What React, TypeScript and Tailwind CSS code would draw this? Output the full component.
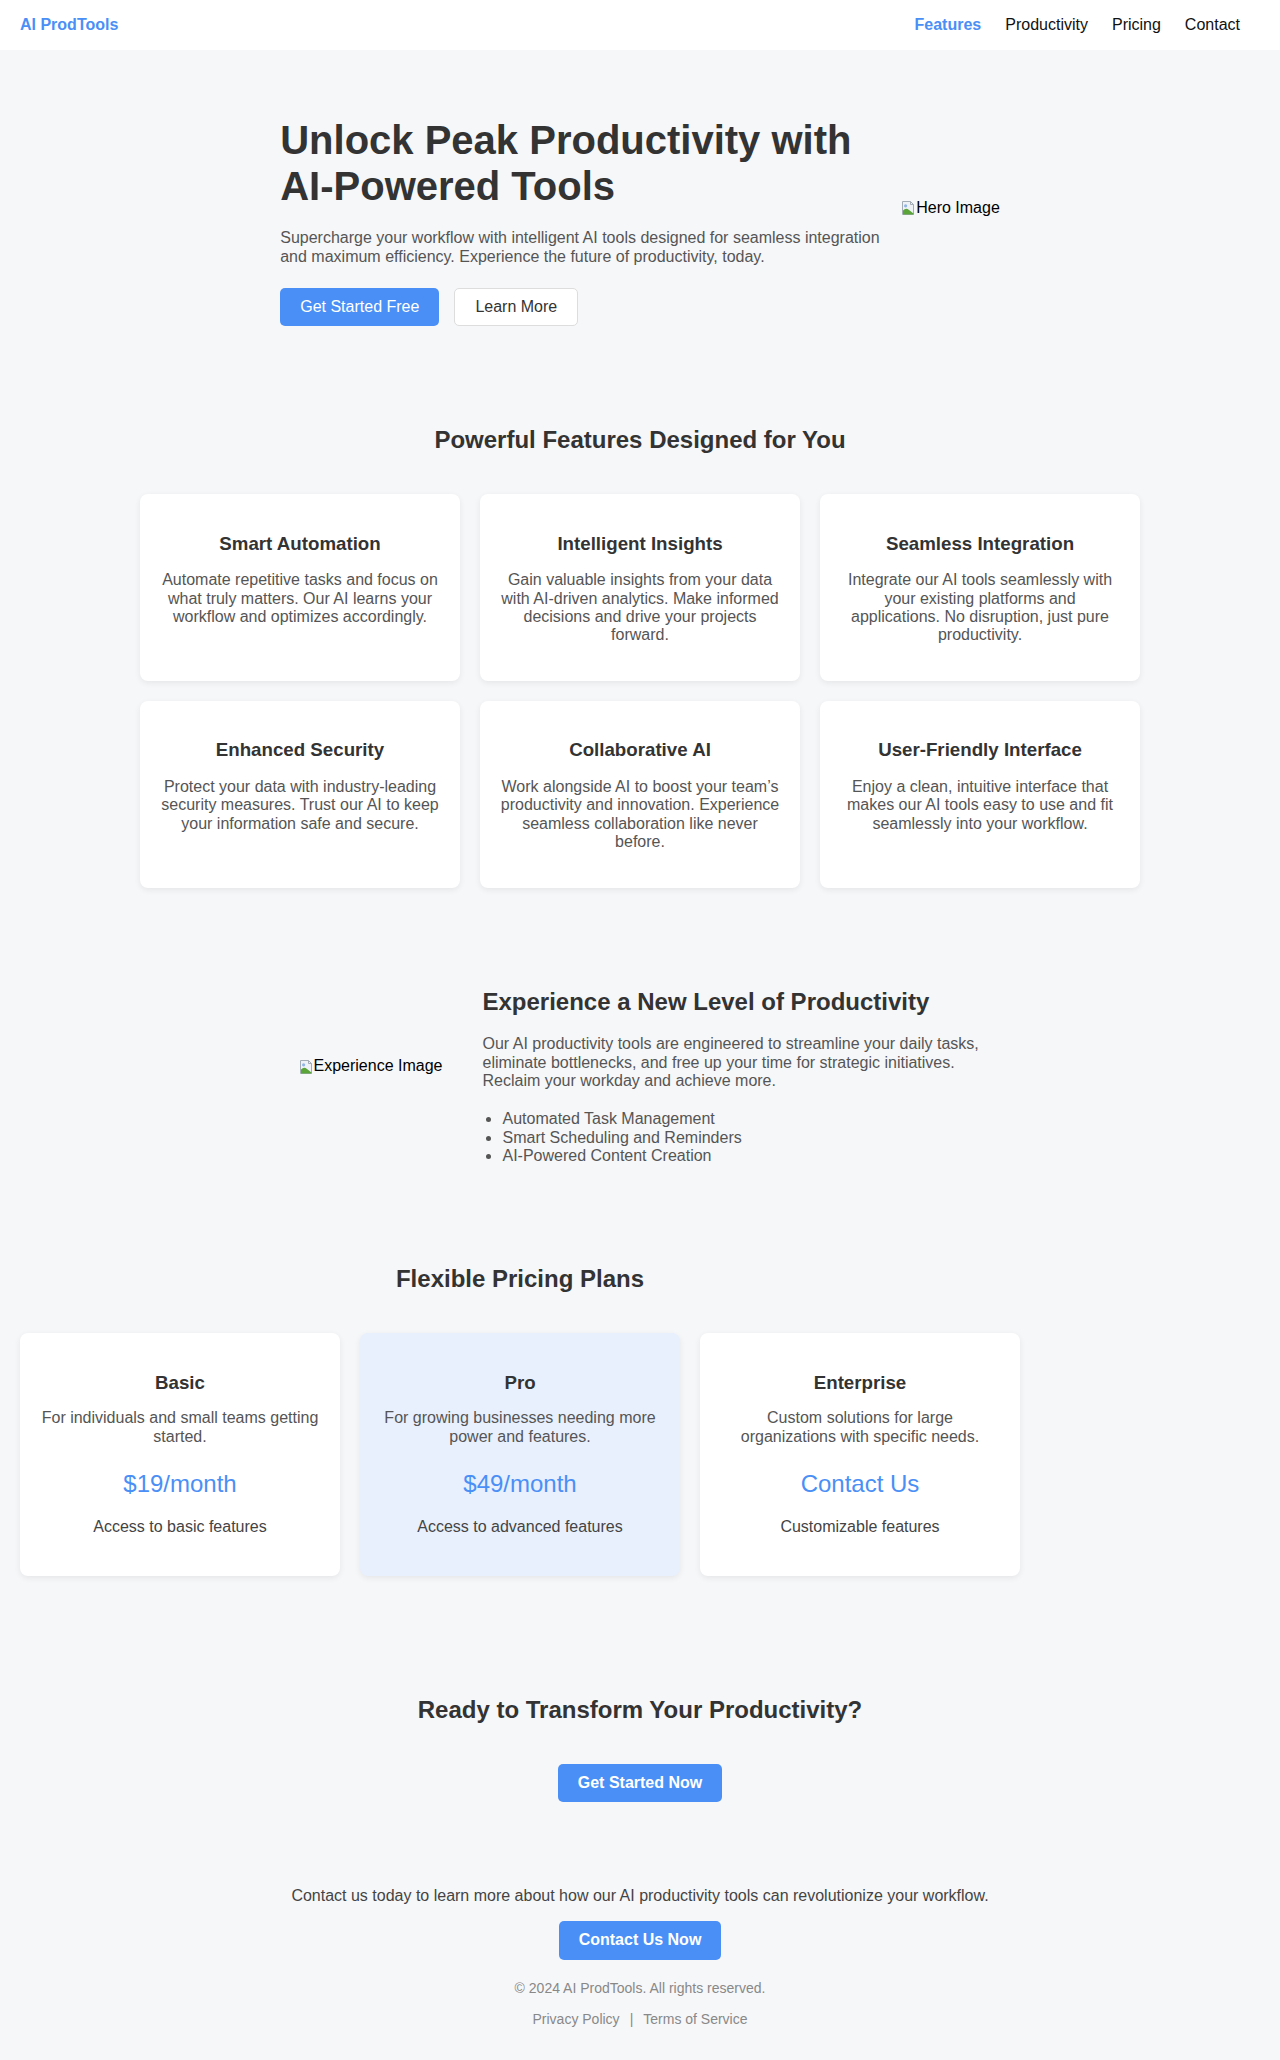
import React from 'react'

const blue = 'text-[#4a8ff6]'

// small stand-in for the browser's broken image glyph
function BrokenImg({ alt }: { alt: string }) {
  return (
    <div className="flex items-center text-[16px] text-black">
      <svg width="16" height="16" viewBox="0 0 16 16" className="shrink-0">
        <path d="M2.5 1.5h8l3 3v10h-11z" fill="#eef2f6" stroke="#a3abb5" />
        <path d="M10.5 1.5v3h3" fill="none" stroke="#a3abb5" />
        <circle cx="5.6" cy="5.8" r="1.6" fill="#8fb5e6" />
        <path d="M3 10.5c2-2 4-2.2 6-.4l4.5 3.4v1H3z" fill="#5ba43a" />
      </svg>
      <span>{alt}</span>
    </div>
  )
}

const features = [
  { title: 'Smart Automation', text: 'Automate repetitive tasks and focus on what truly matters. Our AI learns your workflow and optimizes accordingly.' },
  { title: 'Intelligent Insights', text: 'Gain valuable insights from your data with AI-driven analytics. Make informed decisions and drive your projects forward.' },
  { title: 'Seamless Integration', text: 'Integrate our AI tools seamlessly with your existing platforms and applications. No disruption, just pure productivity.' },
  { title: 'Enhanced Security', text: 'Protect your data with industry-leading security measures. Trust our AI to keep your information safe and secure.' },
  { title: 'Collaborative AI', text: 'Work alongside AI to boost your team\u2019s productivity and innovation. Experience seamless collaboration like never before.' },
  { title: 'User-Friendly Interface', text: 'Enjoy a clean, intuitive interface that makes our AI tools easy to use and fit seamlessly into your workflow.' },
]

const plans = [
  { name: 'Basic', text: 'For individuals and small teams getting started.', price: '$19/month', perk: 'Access to basic features', pro: false },
  { name: 'Pro', text: 'For growing businesses needing more power and features.', price: '$49/month', perk: 'Access to advanced features', pro: true },
  { name: 'Enterprise', text: 'Custom solutions for large organizations with specific needs.', price: 'Contact Us', perk: 'Customizable features', pro: false },
]

export default function App() {
  return (
    <div className="min-h-screen bg-[#f6f7f9] font-['Liberation_Sans',Arial,Helvetica,sans-serif] text-[16px] leading-[1.15] text-[#333]">
      <header className="flex items-center justify-between bg-white px-5 py-4">
        <a className={`font-bold ${blue}`}>AI ProdTools</a>
        <nav className="flex gap-6 pr-5 text-[#111]">
          <a className={`font-bold ${blue}`}>Features</a>
          <a>Productivity</a>
          <a>Pricing</a>
          <a>Contact</a>
        </nav>
      </header>

      {/* hero */}
      <section className="flex items-center justify-center gap-5 px-5 pt-10 pb-10">
        <div className="w-[600px]">
          <h1 className="mt-[26.8px] text-[40px] font-bold text-[#333]">Unlock Peak Productivity with AI-Powered Tools</h1>
          <p className="mt-5 text-[#555]">
            Supercharge your workflow with intelligent AI tools designed for seamless integration and maximum efficiency. Experience the future of productivity, today.
          </p>
          <div className="mt-[22px] flex gap-[15px]">
            <button className="rounded-[5px] bg-[#4a8ff6] px-5 py-2.5 text-white">Get Started Free</button>
            <button className="rounded-[5px] border border-[#ddd] bg-white px-5 py-[9px] text-[#333]">Learn More</button>
          </div>
        </div>
        <BrokenImg alt="Hero Image" />
      </section>

      {/* features */}
      <section className="px-5 pt-[60px] pb-10">
        <h2 className="text-center text-[24px] font-bold">Powerful Features Designed for You</h2>
        <div className="mx-auto mt-10 grid max-w-[1000px] grid-cols-3 gap-5">
          {features.map((f) => (
            <div key={f.title} className="rounded-lg bg-white p-5 text-center shadow-[0_2px_6px_rgba(0,0,0,0.07)]">
              <h3 className="mt-[18.72px] text-[18.72px] font-bold">{f.title}</h3>
              <p className="mt-[17px] mb-4 text-[#555]">{f.text}</p>
            </div>
          ))}
        </div>
      </section>

      {/* experience */}
      <section className="flex items-center justify-center gap-10 px-5 py-10">
        <BrokenImg alt="Experience Image" />
        <div className="w-[500px]">
          <h2 className="mt-5 text-[24px] font-bold">Experience a New Level of Productivity</h2>
          <p className="mt-5 text-[#555]">
            Our AI productivity tools are engineered to streamline your daily tasks, eliminate bottlenecks, and free up your time for strategic initiatives. Reclaim your workday and achieve more.
          </p>
          <ul className="mt-5 list-disc pl-5 text-[#555]">
            <li>Automated Task Management</li>
            <li>Smart Scheduling and Reminders</li>
            <li>AI-Powered Content Creation</li>
          </ul>
        </div>
      </section>

      {/* pricing */}
      <section className="px-5 pt-[60px] pb-[60px]">
        <div className="max-w-[1000px]">
          <h2 className="text-center text-[24px] font-bold">Flexible Pricing Plans</h2>
          <div className="mt-10 grid grid-cols-3 gap-5">
            {plans.map((p) => (
              <div
                key={p.name}
                className={`rounded-lg p-5 text-center shadow-[0_2px_6px_rgba(0,0,0,0.07)] ${p.pro ? 'bg-[#e8f0fd]' : 'bg-white'}`}
              >
                <h3 className="mt-[18.72px] text-[18.72px] font-bold">{p.name}</h3>
                <p className="mt-4 text-[#555]">{p.text}</p>
                <p className={`mt-6 text-[24px] ${blue}`}>{p.price}</p>
                <p className="mt-5 mb-5 text-[#444]">{p.perk}</p>
              </div>
            ))}
          </div>
        </div>
      </section>

      {/* call to action */}
      <section className="flex flex-col items-center px-5 pt-[60px] pb-[60px]">
        <h2 className="text-[24px] font-bold">Ready to Transform Your Productivity?</h2>
        <button className="mt-10 rounded-[5px] bg-[#4a8ff6] px-5 py-2.5 font-bold text-white">Get Started Now</button>
      </section>

      <footer className="flex flex-col items-center px-5 pt-[25px] pb-[33px]">
        <p className="text-[#444]">Contact us today to learn more about how our AI productivity tools can revolutionize your workflow.</p>
        <button className="mt-4 rounded-[5px] bg-[#4a8ff6] px-5 py-2.5 font-bold text-white">Contact Us Now</button>
        <p className="mt-5 text-[14px] text-[#888]">&copy; 2024 AI ProdTools. All rights reserved.</p>
        <div className="mt-[15px] text-[14px] text-[#888]">
          <a className="mx-[10px]">Privacy Policy</a>|<a className="mx-[10px]">Terms of Service</a>
        </div>
      </footer>
    </div>
  )
}
